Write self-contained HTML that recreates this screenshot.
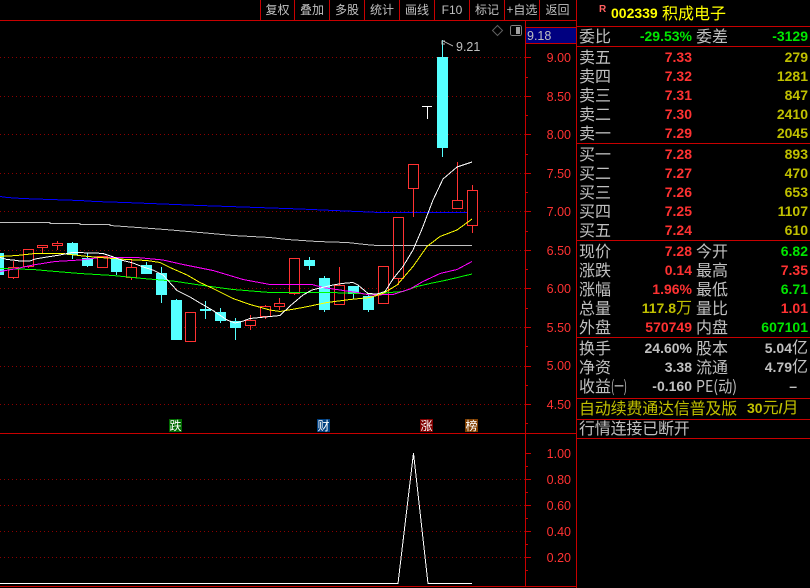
<!DOCTYPE html>
<html><head><meta charset="utf-8">
<style>
html,body{margin:0;padding:0;background:#000;width:810px;height:588px;overflow:hidden}
svg{display:block}
text{font-family:"WenQuanYi Zen Hei","Noto Sans CJK SC","Liberation Sans",sans-serif}
.l{font-size:16px;fill:#c0c0c0}
.n{font-family:"Liberation Sans",sans-serif;font-size:14px;font-weight:bold;text-anchor:end}
.a{font-family:"Liberation Sans",sans-serif;font-size:12.5px;fill:#ff3232;text-anchor:end}
.t{font-size:12px;fill:#c0c0c0;text-anchor:middle}
.m{font-size:12px;fill:#fff;text-anchor:middle}
.r{fill:#ff3232}.y{fill:#c0c000}.g{fill:#00e600}.w{fill:#c0c0c0}
.grid line{stroke:#8c0000;stroke-width:1;stroke-dasharray:1 3}
.ax{stroke:#c80000;stroke-width:1;fill:none}
.up{fill:#000;stroke:#ff3232;stroke-width:1}
.wu{stroke:#ff3232;stroke-width:1}
.dn{fill:#55ffff}
.wd{stroke:#55ffff;stroke-width:1}
.ma{fill:none;stroke-width:1}
</style></head><body>
<svg width="810" height="588" viewBox="0 0 810 588" shape-rendering="crispEdges">
<rect width="810" height="588" fill="#000"/>

<g class="grid">
<line x1="0" x2="525" y1="57.5" y2="57.5"/><line x1="0" x2="525" y1="96.5" y2="96.5"/><line x1="0" x2="525" y1="134.5" y2="134.5"/><line x1="0" x2="525" y1="173.5" y2="173.5"/><line x1="0" x2="525" y1="211.5" y2="211.5"/><line x1="0" x2="525" y1="250.5" y2="250.5"/><line x1="0" x2="525" y1="288.5" y2="288.5"/><line x1="0" x2="525" y1="327.5" y2="327.5"/><line x1="0" x2="525" y1="366.5" y2="366.5"/><line x1="0" x2="525" y1="404.5" y2="404.5"/>
<line x1="0" x2="525" y1="479.5" y2="479.5"/><line x1="0" x2="525" y1="505.5" y2="505.5"/><line x1="0" x2="525" y1="531.5" y2="531.5"/><line x1="0" x2="525" y1="557.5" y2="557.5"/>
</g>

<!-- long moving averages -->
<polyline class="ma" stroke="#c0c0c0" points="0,222.5 50,222.5 50,223.5 80,223.5 80,224.5 110,224.5 110,225.5 138,227.5 165,229.5 200,232.5 233,235.5 270,237.5 287,239.5 317,241.5 347,242.5 365,244.5 377,245.5 472,245.5"/>
<polyline class="ma" stroke="#0000ff" points="0,196.5 7,197.5 22,198.5 50,199.5 80,200.5 95,201.5 125,202.5 200,205.5 300,209 380,212.5 472,212.5"/>

<!-- candles -->
<g>
<rect class="dn" x="0" y="253" width="4" height="22"/>
<line class="wu" x1="13.5" x2="13.5" y1="261" y2="267"/><line class="wu" x1="13.5" x2="13.5" y1="277" y2="279"/><rect class="up" x="8.5" y="267.5" width="10" height="10"/>
<rect class="up" x="23.5" y="249.5" width="10" height="17"/><line class="wu" x1="28.5" x2="28.5" y1="267" y2="268"/>
<line class="wu" x1="42.5" x2="42.5" y1="248" y2="253"/><rect class="up" x="37.5" y="245.5" width="10" height="2"/>
<line class="wu" x1="57.5" x2="57.5" y1="241" y2="250"/><rect class="up" x="52.5" y="243.5" width="10" height="2"/>
<line class="wd" x1="72.5" x2="72.5" y1="242" y2="259"/><rect class="dn" x="67" y="243" width="11" height="12"/>
<line class="wd" x1="87.5" x2="87.5" y1="253" y2="267"/><rect class="dn" x="82" y="258" width="11" height="8"/>
<rect class="up" x="97.5" y="256.5" width="10" height="11"/>
<line class="wd" x1="116.5" x2="116.5" y1="258" y2="275"/><rect class="dn" x="111" y="259" width="11" height="13"/>
<line class="wu" x1="131.5" x2="131.5" y1="259" y2="280"/><rect class="up" x="126.5" y="267.5" width="10" height="10"/>
<line class="wd" x1="146.5" x2="146.5" y1="262" y2="265"/><rect class="dn" x="141" y="265" width="11" height="9"/>
<line class="wd" x1="161.5" x2="161.5" y1="267" y2="303"/><rect class="dn" x="156" y="273" width="11" height="22"/>
<line class="wd" x1="176.5" x2="176.5" y1="299" y2="300"/><rect class="dn" x="171" y="300" width="11" height="40"/>
<rect class="up" x="185.5" y="312.5" width="10" height="29"/>
<line class="wd" x1="205.5" x2="205.5" y1="301" y2="319"/><rect class="dn" x="200" y="309" width="11" height="2"/>
<line class="wd" x1="220.5" x2="220.5" y1="308" y2="323"/><rect class="dn" x="215" y="312" width="11" height="9"/>
<line class="wd" x1="235.5" x2="235.5" y1="318" y2="340"/><rect class="dn" x="230" y="321" width="11" height="7"/>
<line class="wu" x1="250.5" x2="250.5" y1="315" y2="330"/><rect class="up" x="245.5" y="320.5" width="10" height="5"/>
<line class="wu" x1="265.5" x2="265.5" y1="305" y2="319"/><rect class="up" x="260.5" y="306.5" width="10" height="10"/>
<line class="wu" x1="279.5" x2="279.5" y1="298" y2="310"/><rect class="up" x="274.5" y="303.5" width="10" height="3"/>
<rect class="up" x="289.5" y="258.5" width="10" height="35"/><line class="wu" x1="294.5" x2="294.5" y1="294" y2="295"/>
<line class="wd" x1="309.5" x2="309.5" y1="257" y2="270"/><rect class="dn" x="304" y="260" width="11" height="6"/>
<line class="wd" x1="324.5" x2="324.5" y1="276" y2="312"/><rect class="dn" x="319" y="278" width="11" height="32"/>
<line class="wu" x1="339.5" x2="339.5" y1="267" y2="285"/><rect class="up" x="334.5" y="285.5" width="10" height="19"/>
<line class="wd" x1="353.5" x2="353.5" y1="286" y2="299"/><rect class="dn" x="348" y="286" width="11" height="8"/>
<line class="wd" x1="368.5" x2="368.5" y1="294" y2="312"/><rect class="dn" x="363" y="296" width="11" height="14"/>
<rect class="up" x="378.5" y="266.5" width="10" height="37"/>
<line class="wu" x1="398.5" x2="398.5" y1="278" y2="285"/><rect class="up" x="393.5" y="217.5" width="10" height="61" style="fill:none"/>
<line class="wu" x1="413.5" x2="413.5" y1="188" y2="217"/><rect class="up" x="408.5" y="164.5" width="10" height="24"/>
<line class="wd" x1="442.5" x2="442.5" y1="40" y2="157"/><rect class="dn" x="437" y="57" width="11" height="91"/>
<line class="wu" x1="457.5" x2="457.5" y1="162" y2="200"/><rect class="up" x="452.5" y="200.5" width="10" height="8"/>
<line class="wu" x1="472.5" x2="472.5" y1="185" y2="233"/><rect class="up" x="467.5" y="190.5" width="10" height="35"/>
</g>

<!-- moving averages -->
<polyline class="ma" stroke="#00ff00" points="0,268.5 33,269.5 50,271 80,273.5 113,275.5 143,278.5 173,281 203,285.5 233,289.5 270,292.5 330,292.5 360,293.5 370,294.5 390,292.5 403,291.5 417,286.5 430,283.5 447,280 472,274"/>
<polyline class="ma" stroke="#ff00ff" points="0,271.5 17,268.5 33,265 55,261.5 80,260 100,257.5 137,257.5 163,260 183,264.5 213,270.5 243,279.5 270,284.5 312,284.5 323,287.5 340,290 357,292.5 370,295 393,294.5 410,289 423,281.5 440,273.5 457,269.5 472,261.5"/>
<polyline class="ma" stroke="#ffff00" points="0,256.5 17,255.5 35,253.5 63,253.5 83,256 100,257.5 127,259.5 147,260.5 160,262.5 170,267.5 187,275 200,282.5 213,288.5 233,298.5 250,304.5 270,310 280,311.5 303,307.5 327,302.5 350,299.5 370,297.5 383,293.5 397,285 413,266.5 427,246.5 440,236.5 457,230 472,219"/>
<polyline class="ma" stroke="#ffffff" points="0,257.5 7,259.5 13,260 20,261 30,261 35,259 47,257 60,255 72,252.5 95,253 103,253.5 112,256.5 123,260.5 133,263 143,267 153,270 163,275 168,280.5 177,290.5 190,297 200,303 213,310.5 227,320 235,323 242,321.5 250,318.5 270,316.5 280,315.5 290,306 303,295 312,290 318,288.5 333,285 342,283.5 353,282.5 358,285 368,293.5 377,294 385,291.5 393,279 403,266.5 413,250 422,229 433,200 443,179 457,167 472,162"/>

<!-- T mark and high label -->
<path d="M422 106.5H432M427.5 106V119" stroke="#fff" fill="none"/>
<path d="M443 41L453 46" stroke="#c0c0c0" fill="none"/>
<path d="M445 41H442V44H445" stroke="#c0c0c0" fill="none"/>
<text x="456" y="51" style="font-family:'Liberation Sans',sans-serif;font-size:12.5px;fill:#c0c0c0">9.21</text>

<!-- event markers -->
<rect x="169" y="419" width="13" height="13" fill="#006a00"/><text class="m" x="175.5" y="430">跌</text>
<rect x="317" y="419" width="13" height="13" fill="#003f7f"/><text class="m" x="323.5" y="430">财</text>
<rect x="420" y="419" width="13" height="13" fill="#800000"/><text class="m" x="426.5" y="430">涨</text>
<rect x="465" y="419" width="13" height="13" fill="#7f3f00"/><text class="m" x="471.5" y="430">榜</text>

<!-- lower indicator -->
<polyline fill="none" stroke="#fff" points="0,583.5 398,583.5 413.5,453 428,583.5 472,583.5"/>

<!-- frame -->
<path class="ax" d="M0 20.5H576M0 433.5H576M0 586.5H576M525.5 20V586M576.5 0V588M260.5 0V20M294.5 0V20M329.5 0V20M364.5 0V20M399.5 0V20M434.5 0V20M469.5 0V20M504.5 0V20M539.5 0V20"/>

<!-- axis ticks -->
<path class="ax" d="M525 57.5H531M525 96.5H531M525 134.5H531M525 173.5H531M525 211.5H531M525 250.5H531M525 288.5H531M525 327.5H531M525 366.5H531M525 404.5H531M525 77.5H528M525 115.5H528M525 154.5H528M525 192.5H528M525 231.5H528M525 269.5H528M525 308.5H528M525 346.5H528M525 385.5H528M525 423.5H528M525 453.5H531M525 479.5H531M525 505.5H531M525 531.5H531M525 557.5H531M525 466.5H528M525 492.5H528M525 518.5H528M525 544.5H528M525 570.5H528"/>

<text class="a" x="571" y="62">9.00</text><text class="a" x="571" y="101">8.50</text><text class="a" x="571" y="139">8.00</text><text class="a" x="571" y="178">7.50</text><text class="a" x="571" y="216">7.00</text><text class="a" x="571" y="255">6.50</text><text class="a" x="571" y="293">6.00</text><text class="a" x="571" y="332">5.50</text><text class="a" x="571" y="370">5.00</text><text class="a" x="571" y="409">4.50</text>
<text class="a" x="571" y="458">1.00</text><text class="a" x="571" y="484">0.80</text><text class="a" x="571" y="510">0.60</text><text class="a" x="571" y="536">0.40</text><text class="a" x="571" y="562">0.20</text>

<!-- current price box -->
<rect x="526" y="27" width="50" height="16" fill="#000080"/>
<path class="ax" d="M525 27.5H576M525 43.5H576"/>
<text x="527" y="40" style="font-family:'Liberation Sans',sans-serif;font-size:12.5px;fill:#c0c0c0">9.18</text>

<!-- tool icons -->
<path d="M497.5 25.5L502.5 30.5L497.5 35.5L492.5 30.5Z" fill="none" stroke="#606060" shape-rendering="geometricPrecision"/>
<rect x="510.5" y="25.5" width="11" height="10" rx="2" fill="#000" stroke="#808080"/>
<rect x="516" y="27" width="4" height="7" fill="#a0a0a0"/>

<!-- tabs -->
<text class="t" x="277.5" y="14">复权</text><text class="t" x="312" y="14">叠加</text><text class="t" x="347" y="14">多股</text><text class="t" x="382" y="14">统计</text><text class="t" x="417" y="14">画线</text><text class="t" x="452" y="14" style="font-family:'Liberation Sans',sans-serif">F10</text><text class="t" x="487" y="14">标记</text><text class="t" x="522" y="14">+自选</text><text class="t" x="557.5" y="14">返回</text>

<!-- right panel -->
<path class="ax" d="M577 26.5H810M577 46.5H810M577 143.5H810M577 240.5H810M577 337.5H810M577 398.5H810M577 419.5H810M577 438.5H810"/>
<text x="599" y="12" style="font-family:'Liberation Sans',sans-serif;font-size:10px;font-weight:bold;fill:#ff6060">R</text>
<text x="611" y="18" style="font-family:'Liberation Sans',sans-serif;font-size:14px;font-weight:bold;fill:#ffff00">002339</text>
<text x="662" y="19" style="font-size:16px;fill:#ffff00">积成电子</text>

<text class="l" x="579" y="42">委比</text><text class="n g" x="692" y="41">-29.53%</text><text class="l" x="696" y="42">委差</text><text class="n g" x="808" y="41">-3129</text>

<text class="l" x="579" y="63">卖五</text><text class="n r" x="692" y="62">7.33</text><text class="n y" x="808" y="62">279</text>
<text class="l" x="579" y="82">卖四</text><text class="n r" x="692" y="81">7.32</text><text class="n y" x="808" y="81">1281</text>
<text class="l" x="579" y="101">卖三</text><text class="n r" x="692" y="100">7.31</text><text class="n y" x="808" y="100">847</text>
<text class="l" x="579" y="120">卖二</text><text class="n r" x="692" y="119">7.30</text><text class="n y" x="808" y="119">2410</text>
<text class="l" x="579" y="139">卖一</text><text class="n r" x="692" y="138">7.29</text><text class="n y" x="808" y="138">2045</text>

<text class="l" x="579" y="160">买一</text><text class="n r" x="692" y="159">7.28</text><text class="n y" x="808" y="159">893</text>
<text class="l" x="579" y="179">买二</text><text class="n r" x="692" y="178">7.27</text><text class="n y" x="808" y="178">470</text>
<text class="l" x="579" y="198">买三</text><text class="n r" x="692" y="197">7.26</text><text class="n y" x="808" y="197">653</text>
<text class="l" x="579" y="217">买四</text><text class="n r" x="692" y="216">7.25</text><text class="n y" x="808" y="216">1107</text>
<text class="l" x="579" y="236">买五</text><text class="n r" x="692" y="235">7.24</text><text class="n y" x="808" y="235">610</text>

<text class="l" x="579" y="257">现价</text><text class="n r" x="692" y="256">7.28</text><text class="l" x="696" y="257">今开</text><text class="n g" x="808" y="256">6.82</text>
<text class="l" x="579" y="276">涨跌</text><text class="n r" x="692" y="275">0.14</text><text class="l" x="696" y="276">最高</text><text class="n r" x="808" y="275">7.35</text>
<text class="l" x="579" y="295">涨幅</text><text class="n r" x="692" y="294">1.96%</text><text class="l" x="696" y="295">最低</text><text class="n g" x="808" y="294">6.71</text>
<text class="l" x="579" y="314">总量</text><text class="n y" x="692" y="313">117.8<tspan style="font-family:'WenQuanYi Zen Hei','Noto Sans CJK SC',sans-serif;font-weight:normal;font-size:16px">万</tspan></text><text class="l" x="696" y="314">量比</text><text class="n r" x="808" y="313">1.01</text>
<text class="l" x="579" y="333">外盘</text><text class="n r" x="692" y="332">570749</text><text class="l" x="696" y="333">内盘</text><text class="n g" x="808" y="332">607101</text>

<text class="l" x="579" y="354">换手</text><text class="n w" x="692" y="353">24.60%</text><text class="l" x="696" y="354">股本</text><text class="n w" x="808" y="353">5.04<tspan style="font-family:'WenQuanYi Zen Hei','Noto Sans CJK SC',sans-serif;font-weight:normal;font-size:16px">亿</tspan></text>
<text class="l" x="579" y="373">净资</text><text class="n w" x="692" y="372">3.38</text><text class="l" x="696" y="373">流通</text><text class="n w" x="808" y="372">4.79<tspan style="font-family:'WenQuanYi Zen Hei','Noto Sans CJK SC',sans-serif;font-weight:normal;font-size:16px">亿</tspan></text>
<text class="l" x="579" y="392">收益</text><text class="l" x="611" y="392" textLength="16" lengthAdjust="spacingAndGlyphs">(一)</text><text class="n w" x="692" y="391">-0.160</text><text class="l" x="696" y="392" textLength="41" lengthAdjust="spacingAndGlyphs">PE(动)</text><text class="n w" x="797" y="391">–</text>

<text x="579" y="414" style="font-size:16px;fill:#c0c000;letter-spacing:-.2px">自动续费通达信普及版</text>
<text x="747" y="413" style="font-family:'Liberation Sans',sans-serif;font-size:14px;font-weight:bold;fill:#c0c000">30<tspan style="font-family:'WenQuanYi Zen Hei','Noto Sans CJK SC',sans-serif;font-weight:normal;font-size:16px">元</tspan>/<tspan style="font-family:'WenQuanYi Zen Hei','Noto Sans CJK SC',sans-serif;font-weight:normal;font-size:16px">月</tspan></text>
<text class="l" x="579" y="434" style="letter-spacing:-.2px">行情连接已断开</text>
</svg>
</body></html>
